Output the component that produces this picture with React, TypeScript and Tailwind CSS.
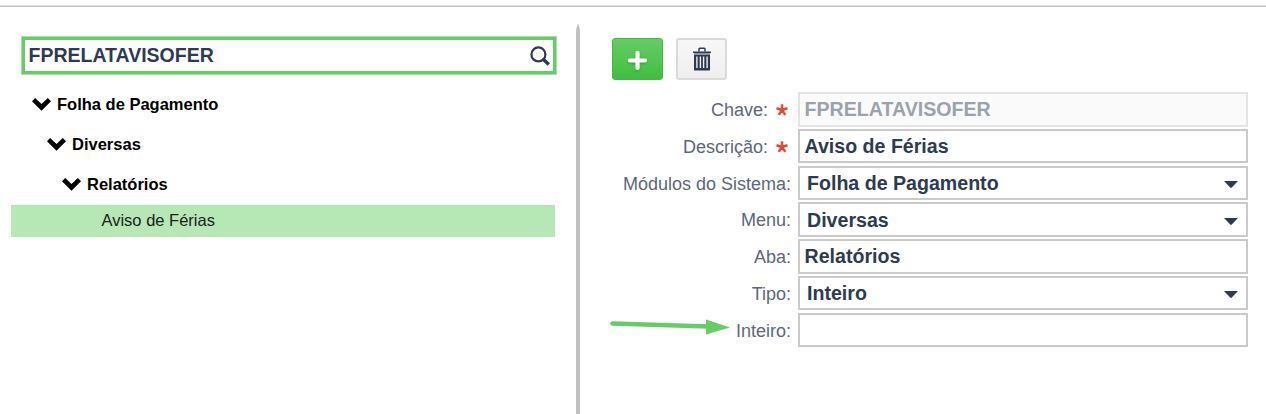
import React from "react";

type Field = {
  label: string;
  value: string;
  required?: boolean;
  disabled?: boolean;
  select?: boolean;
  box: string;
};

const fields: Field[] = [
  { label: "Chave:", value: "FPRELATAVISOFER", required: true, disabled: true, box: "h-[35px] mb-[2px]" },
  { label: "Descrição:", value: "Aviso de Férias", required: true, box: "h-[34px] mb-[3px]" },
  { label: "Módulos do Sistema:", value: "Folha de Pagamento", select: true, box: "h-[34px] mb-[2px]" },
  { label: "Menu:", value: "Diversas", select: true, box: "h-[35px] mb-[2px]" },
  { label: "Aba:", value: "Relatórios", box: "h-[35px] mb-[2px]" },
  { label: "Tipo:", value: "Inteiro", select: true, box: "h-[34px] mb-[3px]" },
  { label: "Inteiro:", value: "", box: "h-[34px]" },
];

const Chevron = () => (
  <svg className="h-[13px] w-[19px] shrink-0" viewBox="0 0 19 13">
    <path d="M0 3.3 3.2 0 9.5 6 15.8 0 19 3.3 9.5 12.8Z" fill="#000" />
  </svg>
);

const Asterisk = () => (
  <svg className="ml-[8px] mr-[3px] h-[12px] w-[12px] shrink-0" viewBox="0 0 12 12">
    <path d="M6 6V.2M6 6 .5 4.3M6 6l5.5-1.7M6 6l-3.3 4.9M6 6l3.3 4.9" stroke="#e04b35" strokeWidth="2.5" fill="none" />
  </svg>
);

function TreeRow({ label, indent }: { label: string; indent: string }) {
  return (
    <div className={`flex h-10 items-center ${indent}`}>
      <Chevron />
      <span className="ml-[6px] text-[16.5px] font-bold leading-5">{label}</span>
    </div>
  );
}

function FieldRow({ field }: { field: Field }) {
  return (
    <div className={`flex ${field.box}`}>
      <div className="flex w-[179px] items-center justify-end pt-px text-[18px] leading-5 text-[#5c677b]">
        {field.label}
        {field.required && <Asterisk />}
      </div>
      <div
        className={`ml-[7px] flex w-[450px] items-center justify-between border-2 pr-2 text-[19.6px] font-bold leading-6 ${
          field.disabled ? "border-[#e4e4e4] bg-[#fafafa] text-[#9ba2ac]" : "border-[#cacaca] bg-white text-[#2d3b50]"
        } ${field.select ? "pl-[7px]" : "pl-[4.5px] pb-px"}`}
      >
        <span>{field.value}</span>
        {field.select && (
          <svg className="mt-[3px] h-[7px] w-[14px]" viewBox="0 0 14 7">
            <path d="M0 0h14L7.8 6.6q-.8.7-1.6 0Z" fill="#2d3b50" />
          </svg>
        )}
      </div>
    </div>
  );
}

export default function App() {
  return (
    <div className="flex h-[414px] w-[1266px] flex-col overflow-hidden bg-white font-['Liberation_Sans',Arial,sans-serif]">
      <div className="mt-[5px] h-[2px] shrink-0 border-b border-[#c3c3c3] bg-[#e2e2e2]" />
      <div className="flex flex-1">
        <div className="w-[576px] shrink-0 pt-[29px]">
          <div className="ml-[21px] flex h-[39px] w-[536px] items-center justify-between border border-[#a9dfa9] bg-[#66cc66] p-[3px]">
            <div className="flex h-full w-full items-center justify-between bg-white pl-[3.5px] pr-[3px]">
              <span className="pb-[2px] text-[19.5px] font-bold leading-6 text-[#2d3b50]">FPRELATAVISOFER</span>
              <svg className="h-5 w-5" viewBox="0 0 20 20" fill="none" stroke="#2d3b50">
                <circle cx="8.4" cy="8.4" r="7" strokeWidth="2.2" />
                <path d="m12.4 12.7 2 1.7" strokeWidth="2" />
                <path d="m13.8 13.8 5 4.8" strokeWidth="3.4" />
              </svg>
            </div>
          </div>
          <div className="mt-[9px]">
            <TreeRow label="Folha de Pagamento" indent="pl-8" />
            <TreeRow label="Diversas" indent="pl-[47px]" />
            <TreeRow label="Relatórios" indent="pl-[62px]" />
            <div className="ml-[11px] mt-px flex h-8 w-[544px] items-center bg-[#b5e8b5] pb-[2px] pl-[90.5px] text-[16.5px] leading-5 text-[#202020]">
              Aviso de Férias
            </div>
          </div>
        </div>
        <div className="mt-[17px] w-[4px] shrink-0 bg-[#c1c1c1] [clip-path:polygon(40%_0,60%_0,100%_6px,100%_100%,0_100%,0_6px)]" />
        <div className="relative ml-8 mt-[31px] w-[640px]">
          <div className="mb-[12px] flex gap-[13px]">
            <button className="flex h-[42px] w-[51px] items-center justify-center rounded-[3px] border border-[#41ba41] bg-linear-to-b from-[#66cc66] to-[#3ebf3e]">
              <svg className="mt-[3px] h-[19px] w-[19px] drop-shadow-[0_1px_1px_rgba(0,80,0,0.35)]" viewBox="0 0 19 19">
                <path d="M9.5 2v15M2 9.5h15" stroke="#fff" strokeWidth="4.2" strokeLinecap="round" />
              </svg>
            </button>
            <button className="flex h-[42px] w-[51px] items-center justify-center rounded-[3px] border-2 border-[#dadada] bg-linear-to-b from-[#f7f7f7] to-[#efefef]">
              <svg className="h-6 w-[18px]" viewBox="0 0 18 24">
                <path d="M6 4.5V2q0-.8.8-.8h4.4q.8 0 .8.8v2.5" fill="none" stroke="#2d3b50" strokeWidth="1.5" />
                <path d="M0 4.6h18v1.4H0ZM1 8h16v15.5H1Z" fill="#2d3b50" />
                <path d="M1 6h16v2H1Z" fill="#8b95a3" />
                <path d="M3.9 9.5v11.5M7.4 9.5v11.5M10.6 9.5v11.5M14.1 9.5v11.5" stroke="#eef0f2" strokeWidth="1.4" />
              </svg>
            </button>
          </div>
          {fields.map((field) => (
            <FieldRow key={field.label} field={field} />
          ))}
          <svg className="absolute left-[-2px] top-[280px] h-[18px] w-[122px]" viewBox="0 0 122 18">
            <path d="M2.5 5.5 98 8.5" stroke="#66cc66" strokeWidth="4.6" strokeLinecap="round" />
            <path d="M96 1.5 120 9.5 96 16.5Z" fill="#66cc66" />
          </svg>
        </div>
      </div>
    </div>
  );
}
